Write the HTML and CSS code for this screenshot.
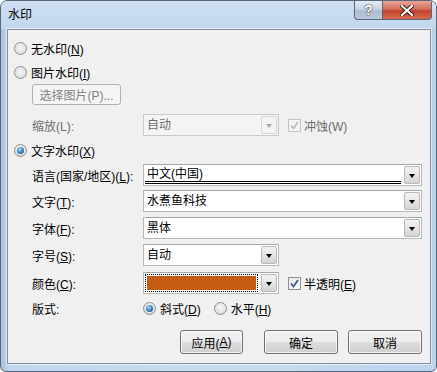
FILE: index.html
```html
<!DOCTYPE html>
<html lang="zh-CN">
<head>
  <meta charset="UTF-8" />
  <title>水印</title>
  <link rel="stylesheet" href="styles.css">
</head>
<body>
  <div class="window">
    <div class="titlebar">
      <span class="title">水印</span>
      <div class="caption-btns">
        <div class="cap-btn help">?</div>
        <div class="cap-btn close">
          <svg width="14" height="11" viewBox="0 0 14 11">
            <path d="M2 1 L12 10 M12 1 L2 10" stroke="#3b1a16" stroke-width="4" stroke-linecap="square"/>
            <path d="M2 1 L12 10 M12 1 L2 10" stroke="#fff" stroke-width="2.2" stroke-linecap="square"/>
          </svg>
        </div>
      </div>
    </div>

    <div class="client">
      <div class="radio-row r1">
        <span class="radio"></span>
        <span>无水印(<u>N</u>)</span>
      </div>
      <div class="radio-row r2">
        <span class="radio"></span>
        <span>图片水印(<u>I</u>)</span>
      </div>
      <div class="btn-row">
        <div class="btn disabled pick-btn">选择图片(P)...</div>
      </div>
      <div class="field-row r4">
        <span class="label disabled-text">缩放(L):</span>
        <div class="combo short disabled">
          <span class="combo-text">自动</span>
          <span class="drop"><i class="arrow"></i></span>
        </div>
        <span class="check disabled"><svg width="11" height="11" viewBox="0 0 11 11"><path d="M2 5.5 L4.5 8.5 L9 2" fill="none" stroke="#b9b9b9" stroke-width="1.6"/></svg></span>
        <span class="disabled-text">冲蚀(W)</span>
      </div>
      <div class="radio-row r5">
        <span class="radio on"></span>
        <span>文字水印(<u>X</u>)</span>
      </div>
      <div class="field-row r6">
        <span class="label">语言(国家/地区)(<u>L</u>):</span>
        <div class="combo long">
          <span class="combo-text focus-line">中文(中国)</span>
          <span class="drop"><i class="arrow"></i></span>
        </div>
      </div>
      <div class="field-row r7">
        <span class="label">文字(<u>T</u>):</span>
        <div class="combo long">
          <span class="combo-text">水煮鱼科技</span>
          <span class="drop"><i class="arrow"></i></span>
        </div>
      </div>
      <div class="field-row r8">
        <span class="label">字体(<u>F</u>):</span>
        <div class="combo long">
          <span class="combo-text">黑体</span>
          <span class="drop"><i class="arrow"></i></span>
        </div>
      </div>
      <div class="field-row r9">
        <span class="label">字号(<u>S</u>):</span>
        <div class="combo short">
          <span class="combo-text">自动</span>
          <span class="drop"><i class="arrow"></i></span>
        </div>
      </div>
      <div class="field-row r10">
        <span class="label">颜色(<u>C</u>):</span>
        <div class="combo short color-combo">
          <span class="swatch-wrap"><span class="swatch"></span></span>
          <span class="drop"><i class="arrow"></i></span>
        </div>
        <span class="check"><svg width="11" height="11" viewBox="0 0 11 11"><path d="M2 5.5 L4.5 8.5 L9 2" fill="none" stroke="#3c5a8c" stroke-width="1.8"/></svg></span>
        <span>半透明(<u>E</u>)</span>
      </div>
      <div class="field-row r11">
        <span class="label">版式:</span>
        <span class="radio on"></span>
        <span class="opt">斜式(<u>D</u>)</span>
        <span class="radio"></span>
        <span class="opt">水平(<u>H</u>)</span>
      </div>
      <div class="action-row">
        <div class="btn apply">应用(<u>A</u>)</div>
        <div class="btn ok">确定</div>
        <div class="btn cancel">取消</div>
      </div>
    </div>
  </div>
</body>
</html>
```

FILE: styles.css
```css
* { margin: 0; padding: 0; box-sizing: border-box; }

body {
  font-family: "Liberation Sans", "Noto Sans CJK SC", sans-serif;
  font-size: 12px;
  color: #000;
  background: #fff;
}

u { text-decoration: underline; text-underline-offset: 1px; }

.window {
  width: 437px;
  height: 372px;
  border: 1px solid #56677a;
  border-radius: 7px 7px 6px 6px;
  background: linear-gradient(to right, #a9c0da 0px, #c3d8ef 8px, #c8dcf1 60%, #bcd3ec 100%);
  overflow: hidden;
}

.titlebar {
  height: 28px;
  display: flex;
  align-items: flex-start;
  background: linear-gradient(to bottom, #cfe0f3, #c1d6ee);
}

.title {
  margin-left: 7px;
  margin-top: 6px;
  line-height: 16px;
  color: #000;
}

.caption-btns {
  margin-left: auto;
  margin-right: 4px;
  display: flex;
}

.cap-btn {
  height: 19px;
  display: flex;
  align-items: center;
  justify-content: center;
  border: 1px solid #5a6778;
  border-top: none;
}

.help {
  width: 28px;
  border-radius: 0 0 0 4px;
  border-right: none;
  background: linear-gradient(to bottom, #e3ebf4 0%, #c9d5e3 45%, #aebdd0 55%, #b9c8da 100%);
  color: #fff;
  font-weight: bold;
  font-size: 14px;
  text-shadow: 0 0 2px #27323f, 0 0 1px #27323f;
}

.close {
  width: 50px;
  border-radius: 0 0 4px 0;
  background: linear-gradient(to bottom, #e8a596 0%, #d2705e 45%, #c3412c 55%, #d46a50 100%);
}

.client {
  margin-left: 6px;
  width: 424px;
  height: 335px;
  background: #f0f0f0;
  border: 1px solid #7d8fa3;
  box-shadow: 0 0 0 1px rgba(255, 255, 255, 0.55);
  padding-top: 10px;
}

.radio-row {
  height: 16px;
  display: flex;
  align-items: center;
  gap: 4px;
  padding-left: 6px;
}

.r2 { margin-top: 8px; }
.r5 { margin-top: 6px; }

.radio {
  width: 13px;
  height: 13px;
  border-radius: 50%;
  border: 1px solid #8e8f8f;
  background: radial-gradient(circle at 50% 40%, #f4f4f4 0%, #e6e6e6 50%, #cfcfcf 100%);
  flex-shrink: 0;
  position: relative;
}

.radio.on::after {
  content: "";
  position: absolute;
  left: 2px;
  top: 2px;
  width: 7px;
  height: 7px;
  border-radius: 50%;
  background: radial-gradient(circle at 40% 35%, #b7dcf7 0%, #3b83c4 50%, #174f8b 100%);
}

.btn-row {
  margin-top: 4px;
  padding-left: 24px;
}

.btn {
  height: 24px;
  display: flex;
  align-items: center;
  justify-content: center;
  border: 1px solid #707070;
  border-radius: 3px;
  background: linear-gradient(to bottom, #f2f2f2 0%, #ebebeb 48%, #dddddd 52%, #cfcfcf 100%);
  box-shadow: inset 0 0 0 1px rgba(255, 255, 255, 0.7);
}

.btn.disabled {
  border-color: #adb2b5;
  background: #f4f4f4;
  color: #838383;
  box-shadow: none;
}

.pick-btn {
  width: 89px;
  height: 21px;
}

.field-row {
  height: 22px;
  display: flex;
  align-items: center;
  padding-left: 24px;
}

.r4 { margin-top: 9px; }
.r6 { margin-top: 6px; }
.r7 { margin-top: 4px; }
.r8 { margin-top: 5px; }
.r9 { margin-top: 5px; }
.r10 { margin-top: 6px; }
.r11 { margin-top: 6px; height: 16px; }

.label {
  width: 111px;
  flex-shrink: 0;
}

.disabled-text { color: #6d6d6d; }

.combo {
  height: 22px;
  display: flex;
  align-items: center;
  background: #fff;
  border: 1px solid #b5b8bd;
  border-top-color: #a3a6ab;
  padding: 1px;
}

.combo.long { width: 279px; }
.combo.short { width: 136px; }

.combo.disabled {
  background: #f4f4f4;
  border-color: #c9cacc;
  color: #6d6d6d;
}

.combo-text {
  flex: 1;
  padding-left: 2px;
  line-height: 16px;
}

.focus-line {
  border-bottom: 3px double #000;
  margin-right: 3px;
  line-height: 14px;
}

.drop {
  width: 16px;
  height: 18px;
  display: flex;
  align-items: center;
  justify-content: center;
  border: 1px solid #b8b8b8;
  border-radius: 2px;
  background: linear-gradient(to bottom, #f3f3f3 0%, #e6e6e6 50%, #d3d3d3 100%);
}

.arrow {
  width: 0;
  height: 0;
  border-left: 3.5px solid transparent;
  border-right: 3.5px solid transparent;
  border-top: 4px solid #000;
  margin-top: 1px;
}

.combo.disabled .drop {
  border-color: #d6d6d6;
  background: #f4f4f4;
}

.combo.disabled .arrow { border-top-color: #a8a8a8; }

.color-combo { padding: 1px 1px 1px 1px; }

.swatch-wrap {
  flex: 1;
  height: 18px;
  border: 1px dotted #000;
  padding: 1px;
  margin-right: 3px;
}

.swatch {
  display: block;
  height: 100%;
  background: #c55a11;
}

.check {
  width: 13px;
  height: 13px;
  margin-left: 9px;
  margin-right: 3px;
  border: 1px solid #8e8f8f;
  background: linear-gradient(135deg, #e8e8e8, #fafafa);
  display: flex;
  align-items: center;
  justify-content: center;
}

.check.disabled {
  border-color: #c3c3c3;
  background: #f4f4f4;
}

.opt { margin-left: 4px; margin-right: 13px; }

.action-row {
  margin-top: 14px;
  display: flex;
  justify-content: flex-end;
  padding-right: 8px;
}

.apply { width: 63px; margin-right: 21px; }
.ok { width: 74px; margin-right: 10px; }
.cancel { width: 74px; }
```
